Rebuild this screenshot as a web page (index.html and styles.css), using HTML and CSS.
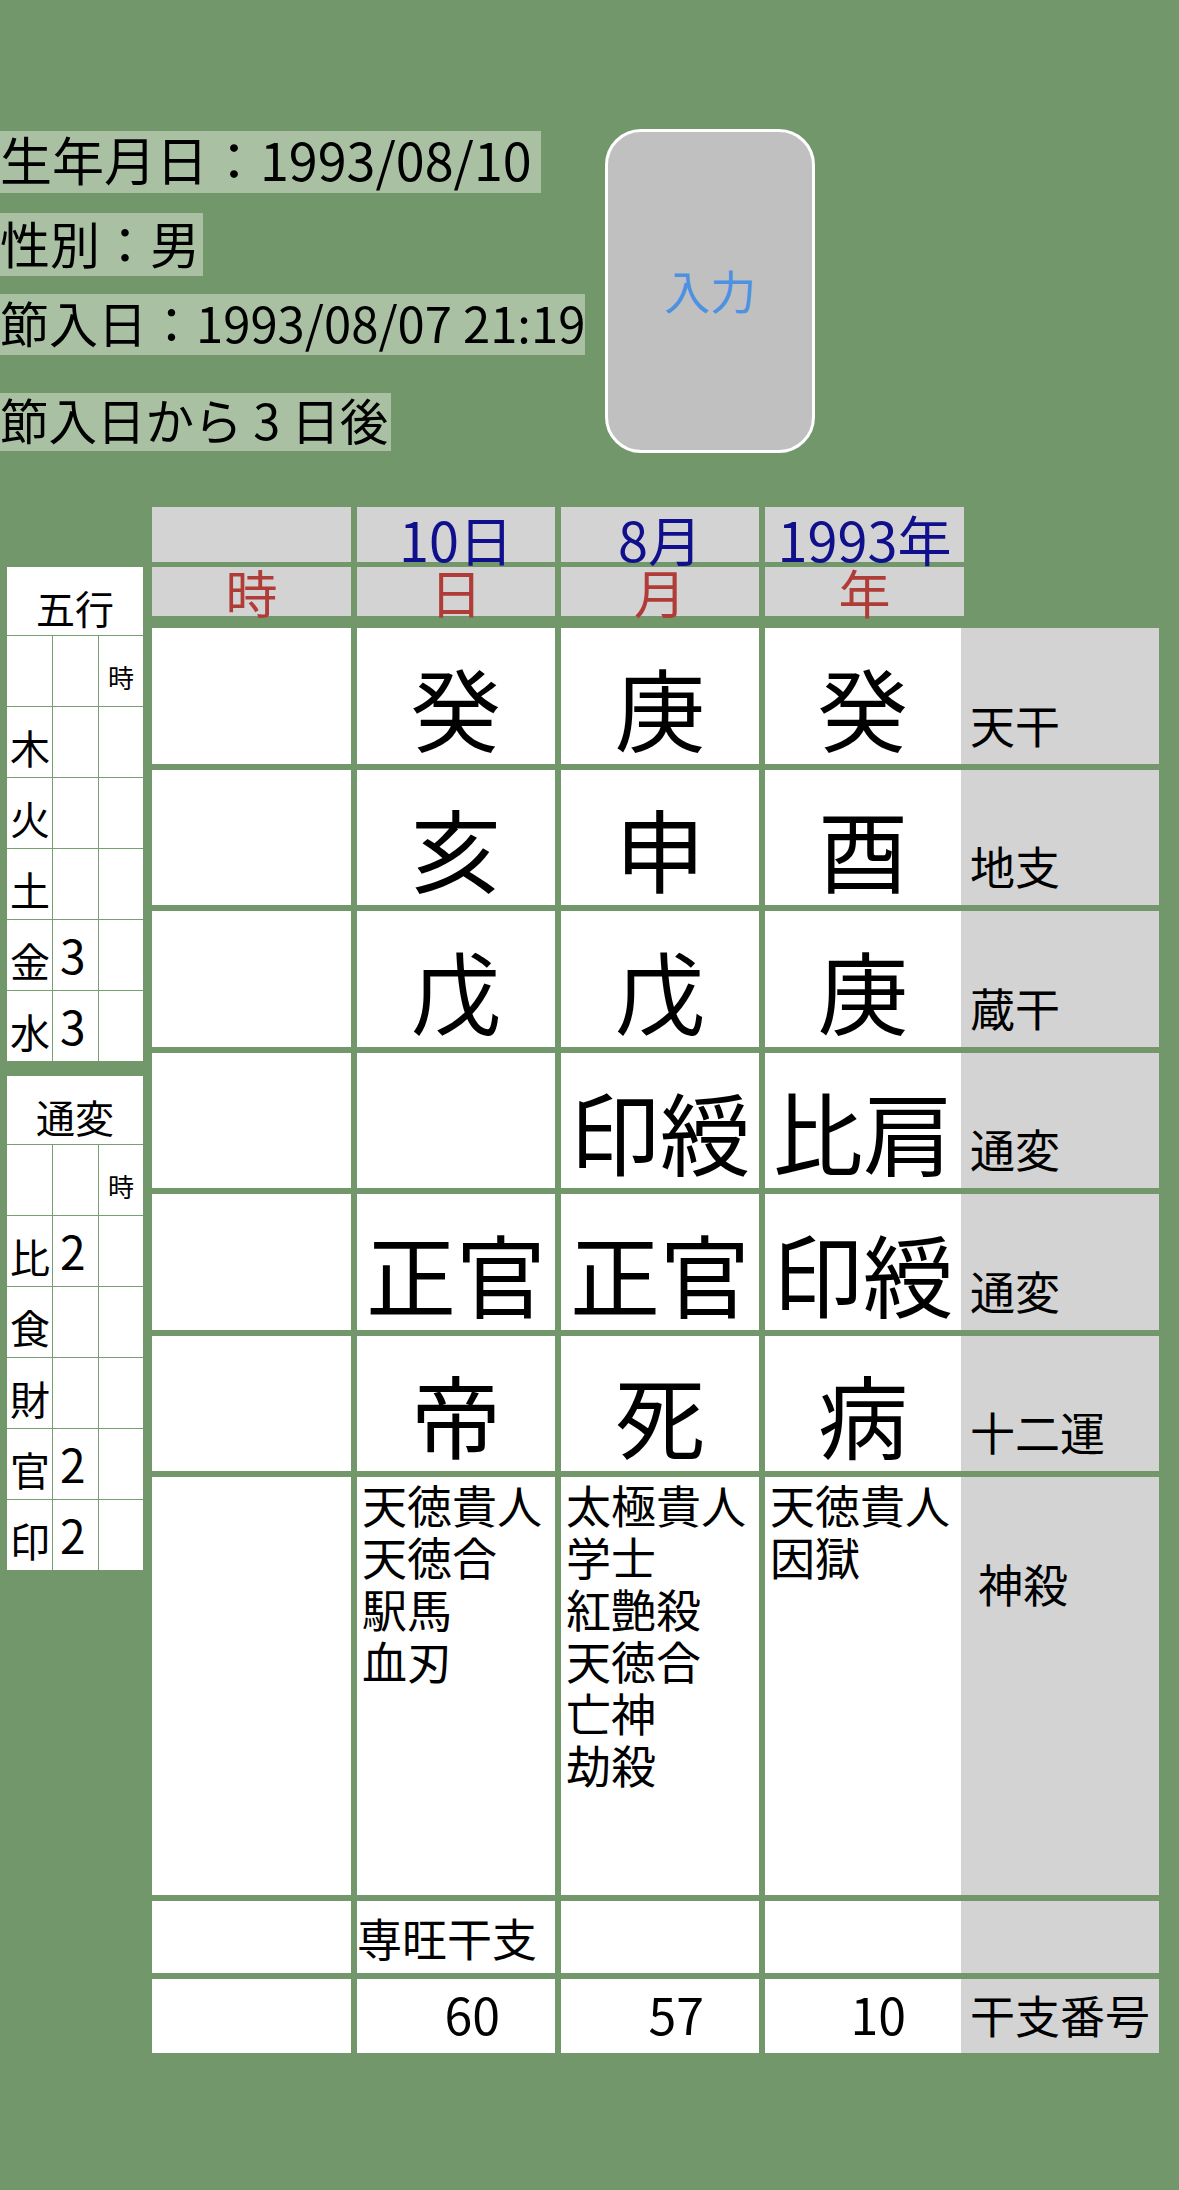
FILE: index.html
```html
<!DOCTYPE html>
<html lang="ja">
<head>
<meta charset="utf-8">
<title>命式</title>
<link rel="stylesheet" href="styles.css">
</head>
<body>
<div class="page">
  <section class="top">
    <div class="info">
      <div class="band b1">生年月日：1993/08/10</div>
      <div class="band b2">性別：男</div>
      <div class="band b3">節入日：1993/08/07 21:19</div>
      <div class="band b4">節入日から 3 日後</div>
    </div>
    <div class="btn">入力</div>
  </section>

  <section class="chart">
    <aside class="side">
      <div class="mini">
        <div class="mc head">五行</div>
        <div class="mc"></div><div class="mc"></div><div class="mc s">時</div>
        <div class="mc k">木</div><div class="mc n"></div><div class="mc"></div>
        <div class="mc k">火</div><div class="mc n"></div><div class="mc"></div>
        <div class="mc k">土</div><div class="mc n"></div><div class="mc"></div>
        <div class="mc k">金</div><div class="mc n">3</div><div class="mc"></div>
        <div class="mc k">水</div><div class="mc n">3</div><div class="mc"></div>
      </div>
      <div class="mini">
        <div class="mc head">通変</div>
        <div class="mc"></div><div class="mc"></div><div class="mc s">時</div>
        <div class="mc k">比</div><div class="mc n">2</div><div class="mc"></div>
        <div class="mc k">食</div><div class="mc n"></div><div class="mc"></div>
        <div class="mc k">財</div><div class="mc n"></div><div class="mc"></div>
        <div class="mc k">官</div><div class="mc n">2</div><div class="mc"></div>
        <div class="mc k">印</div><div class="mc n">2</div><div class="mc"></div>
      </div>
    </aside>

    <div class="pillars">
      <div class="hrow h1">
        <div class="hc wide"></div>
        <div class="hc">10日</div>
        <div class="hc">8月</div>
        <div class="hc wide">1993年</div>
      </div>
      <div class="hrow h2">
        <div class="hc wide">時</div>
        <div class="hc">日</div>
        <div class="hc">月</div>
        <div class="hc wide">年</div>
      </div>

      <div class="row first">
        <div class="cell p1"></div><div class="cell">癸</div><div class="cell">庚</div><div class="cell p4">癸</div>
        <div class="label">天干</div>
      </div>
      <div class="row">
        <div class="cell p1"></div><div class="cell">亥</div><div class="cell">申</div><div class="cell p4">酉</div>
        <div class="label">地支</div>
      </div>
      <div class="row">
        <div class="cell p1"></div><div class="cell">戊</div><div class="cell">戊</div><div class="cell p4">庚</div>
        <div class="label">蔵干</div>
      </div>
      <div class="row">
        <div class="cell p1"></div><div class="cell"></div><div class="cell">印綬</div><div class="cell p4">比肩</div>
        <div class="label">通変</div>
      </div>
      <div class="row">
        <div class="cell p1"></div><div class="cell">正官</div><div class="cell">正官</div><div class="cell p4">印綬</div>
        <div class="label">通変</div>
      </div>
      <div class="row">
        <div class="cell p1"></div><div class="cell">帝</div><div class="cell">死</div><div class="cell p4">病</div>
        <div class="label">十二運</div>
      </div>
      <div class="row tall">
        <div class="cell p1"></div>
        <div class="cell">
          <div>天徳貴人</div><div>天徳合</div><div>駅馬</div><div>血刃</div>
        </div>
        <div class="cell">
          <div>太極貴人</div><div>学士</div><div>紅艶殺</div><div>天徳合</div><div>亡神</div><div>劫殺</div>
        </div>
        <div class="cell p4">
          <div>天徳貴人</div><div>因獄</div>
        </div>
        <div class="label">神殺</div>
      </div>
      <div class="row short">
        <div class="cell p1"></div><div class="cell">専旺干支</div><div class="cell"></div><div class="cell p4"></div>
        <div class="label"></div>
      </div>
      <div class="row num">
        <div class="cell p1"></div><div class="cell">60</div><div class="cell">57</div><div class="cell p4">10</div>
        <div class="label">干支番号</div>
      </div>
    </div>
  </section>
</div>
</body>
</html>
```

FILE: styles.css
```css
html, body {
  margin: 0;
  padding: 0;
  background: #71976b;
}

body {
  font-family: "Noto Sans CJK JP", "Noto Sans", sans-serif;
  color: #000;
}

.page {
  padding-top: 129px;
}

/* ---------- top info ---------- */
.top {
  display: flex;
  align-items: flex-start;
}

.info {
  width: 605px;
  display: flex;
  flex-direction: column;
  align-items: flex-start;
  padding-top: 2px;
}

.band {
  background: #a9c1a2;
  display: flex;
  align-items: center;
  box-sizing: border-box;
  line-height: 1;
  white-space: pre;
  padding-bottom: 6px;
}

.b1 { font-size: 52px; height: 62px; padding-right: 9px; }
.b2 { font-size: 50px; height: 63px; margin-top: 20px; padding-right: 3px; }
.b3 { font-size: 49px; height: 61px; margin-top: 18px; padding-right: 0; }
.b4 { font-size: 48.5px; height: 58px; margin-top: 38px; padding-right: 3px; }

.btn {
  width: 210px;
  height: 324px;
  box-sizing: border-box;
  border: 3px solid #fff;
  border-radius: 36px;
  background: #c0c0c0;
  color: #4c91e2;
  font-size: 46px;
  line-height: 1;
  display: flex;
  align-items: center;
  justify-content: center;
  padding-bottom: 4px;
}

/* ---------- chart ---------- */
.chart {
  display: flex;
  align-items: flex-start;
  margin-top: 54px;
}

.side {
  margin-left: 7px;
  margin-top: 60px;
  width: 136px;
  display: flex;
  flex-direction: column;
  gap: 15px;
}

.mini {
  display: grid;
  grid-template-columns: 45px 45px 44px;
  grid-template-rows: 68px repeat(6, 70px);
  gap: 1px;
  background: #76a070;
}

.mc {
  background: #fff;
  display: flex;
  align-items: flex-end;
  line-height: 1;
  box-sizing: border-box;
}

.mc.head {
  grid-column: 1 / -1;
  justify-content: center;
  font-size: 39px;
  padding-bottom: 8px;
}

.mc.k {
  font-size: 40px;
  padding: 0 0 10px 3px;
}

.mc.n {
  font-size: 46px;
  padding: 0 0 13px 7px;
}

.mc.s {
  font-size: 26px;
  justify-content: center;
  padding-bottom: 16px;
}

.pillars {
  margin-left: 9px;
  display: flex;
  flex-direction: column;
}

.hrow {
  display: flex;
  gap: 6px;
}

.hc {
  width: 198px;
  background: #d3d3d3;
  text-align: center;
  box-sizing: border-box;
  white-space: nowrap;
}

.hc.wide { width: 199px; }

.h1 .hc {
  height: 55px;
  color: #10108c;
  font-size: 54px;
  line-height: 55px;
  padding-top: 4px;
}

.h2 {
  margin-top: 5px;
}

.h2 .hc {
  height: 49px;
  color: #af3c37;
  font-size: 52px;
  line-height: 49px;
}

.row {
  display: flex;
  height: 135.5px;
  margin-top: 6px;
}

.row.first { margin-top: 12px; }

.cell {
  width: 198px;
  margin-right: 6px;
  background: #fff;
  display: flex;
  align-items: flex-end;
  justify-content: center;
  box-sizing: border-box;
  font-size: 90px;
  line-height: 1;
  padding-bottom: 13px;
  white-space: nowrap;
}

.cell.p1 { width: 199px; }
.cell.p4 { width: 196px; margin-right: 0; }

.label {
  width: 198px;
  background: #d3d3d3;
  display: flex;
  align-items: flex-end;
  box-sizing: border-box;
  font-size: 45px;
  line-height: 1;
  padding: 0 0 17px 9px;
  white-space: nowrap;
}

/* 神殺 row */
.row.tall { height: 418px; }

.tall .cell {
  display: block;
  font-size: 45px;
  line-height: 52px;
  padding: 2px 0 0 5px;
}

.tall .label {
  align-items: flex-start;
  padding: 84px 0 0 17px;
}

/* 専旺 row */
.row.short { height: 72px; }

.short .cell {
  font-size: 45px;
  justify-content: flex-start;
  padding: 0 0 13px 0;
}

/* 干支番号 row */
.row.num { height: 74px; }

.num .cell {
  font-size: 50px;
  justify-content: flex-end;
  padding: 0 55px 15px 0;
}

.num .label {
  padding-bottom: 16px;
}
```
